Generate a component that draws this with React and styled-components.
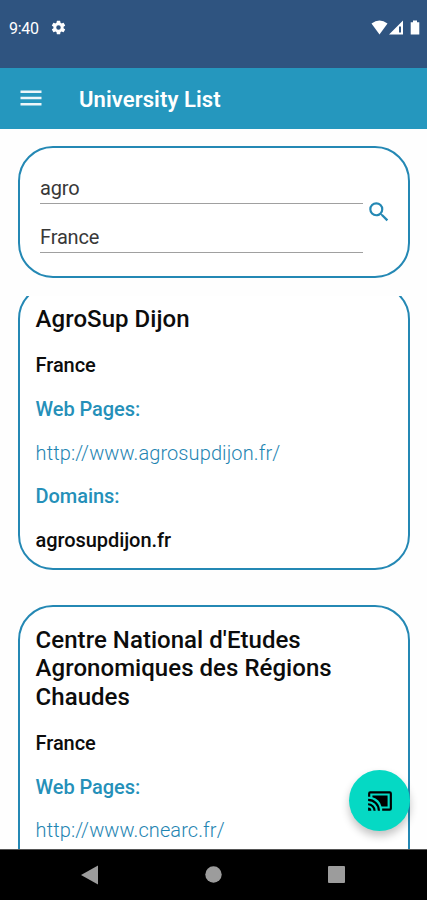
import React from "react";
import styled, { createGlobalStyle } from "styled-components";

const GlobalStyle = createGlobalStyle`
  * { box-sizing: border-box; }
  body { margin: 0; background: #fefefe; font-family: Roboto, "Noto Sans", sans-serif; color: #0c0c0c; }
`;

const Screen = styled.div`
  display: flex;
  flex-direction: column;
  width: 427px;
  height: 900px;
  overflow: hidden;
  position: relative;
`;

const StatusBar = styled.header`
  display: flex;
  align-items: flex-start;
  justify-content: space-between;
  flex: 0 0 68px;
  padding: 18px 6px 0 9px;
  background: #2f5480;
  color: #fff;
`;

const StatusGroup = styled.div`
  display: flex;
  align-items: center;
  height: 19px;
  gap: 11px;
`;

const Clock = styled.span`
  padding-top: 1px;
  font-size: 16px;
  line-height: 19px;
  letter-spacing: -0.3px;
`;

const AppBar = styled.div`
  display: flex;
  align-items: center;
  flex: 0 0 60.5px;
  padding: 2px 20px 0;
  gap: 37px;
  background: #2597be;
  color: #fff;
`;

const AppTitle = styled.h1`
  margin: 0;
  padding-top: 2px;
  font-size: 22px;
  line-height: 28px;
  font-weight: 600;
  letter-spacing: 0.1px;
`;

const Icon = styled.svg`
  display: block;
  flex: none;
  fill: currentColor;
`;

const MenuIcon = styled(Icon)`
  margin-top: -3px;
  opacity: 0.92;
`;

const SearchPanel = styled.form`
  display: flex;
  align-items: center;
  flex: 0 0 132px;
  margin: 17.5px 17px 0 18px;
  padding: 0 14px 0 20px;
  border: 2px solid #2488b4;
  border-radius: 35px;
  background: #fff;
`;

const Fields = styled.div`
  display: flex;
  flex-direction: column;
  flex: 0 0 323px;
  gap: 19px;
  padding-top: 3px;
`;

const Field = styled.input`
  display: block;
  width: 100%;
  height: 30px;
  padding: 0 0 1px;
  border: 0;
  border-bottom: 1px solid #a0a0a0;
  outline: 0;
  background: transparent;
  font: 400 20px/28px Roboto, sans-serif;
  letter-spacing: -0.15px;
  color: #383838;
`;

const SearchButton = styled.button`
  display: flex;
  padding: 0;
  margin-left: 3px;
  border: 0;
  background: none;
  color: #2488b4;
`;

const Results = styled.main`
  flex: 1;
  min-height: 0;
  margin-top: 18px;
  overflow: hidden;
`;

const ResultList = styled.div`
  display: flex;
  flex-direction: column;
  gap: 34.5px;
  margin: -12px 17px 0 18px;
`;

const Card = styled.article`
  min-height: 286px;
  padding: 19px 50px 3.5px 15.6px;
  border: 2px solid #2488b4;
  border-radius: 35px;
  background: #fff;
`;

const CardTitle = styled.h2`
  margin: 0 0 10.5px;
  font-size: 24px;
  line-height: 28.6px;
  font-weight: 500;
  letter-spacing: 0.04px;
`;

const Line = styled.div`
  font-size: 20px;
  line-height: 43.8px;
  font-weight: 500;
  letter-spacing: -0.08px;
`;

const Label = styled(Line)`
  color: #2590b9;
`;

const Link = styled.a`
  display: block;
  font-size: 20px;
  line-height: 43.8px;
  font-weight: 300;
  letter-spacing: 0.1px;
  color: #1f85b2;
  text-decoration: none;
`;

const CastButton = styled.button`
  position: absolute;
  left: 349px;
  top: 770px;
  display: flex;
  align-items: center;
  justify-content: center;
  width: 61px;
  height: 61px;
  padding: 0;
  border: 0;
  border-radius: 50%;
  background: #05d9c4;
  color: #000;
  box-shadow: 0 5px 9px rgba(0, 0, 0, 0.24);
`;

const NavBar = styled.nav`
  display: flex;
  align-items: center;
  justify-content: space-between;
  flex: 0 0 51.5px;
  padding: 0 82px 0 81px;
  border-top: 1px solid #555;
  background: #000;
  color: #9c9c9c;
`;

const universities = [
  {
    name: "AgroSup Dijon",
    country: "France",
    page: "http://www.agrosupdijon.fr/",
    domain: "agrosupdijon.fr",
  },
  {
    name: "Centre National d'Etudes Agronomiques des Régions Chaudes",
    country: "France",
    page: "http://www.cnearc.fr/",
  },
];

function University({ name, country, page, domain }) {
  return (
    <Card>
      <CardTitle>{name}</CardTitle>
      <Line>{country}</Line>
      <Label>Web Pages:</Label>
      <Link>{page}</Link>
      {domain && (
        <>
          <Label>Domains:</Label>
          <Line>{domain}</Line>
        </>
      )}
    </Card>
  );
}

export default function App() {
  return (
    <>
      <GlobalStyle />
      <Screen>
        <StatusBar>
          <StatusGroup>
            <Clock>9:40</Clock>
            <Icon width="17" height="17" viewBox="0 0 24 24">
              <path d="M19.14 12.94c.04-.3.06-.61.06-.94s-.02-.64-.07-.94l2.03-1.58a.49.49 0 0 0 .12-.61l-1.92-3.32a.49.49 0 0 0-.59-.22l-2.39.96a7 7 0 0 0-1.62-.94l-.36-2.54A.48.48 0 0 0 13.92 2.4h-3.84a.48.48 0 0 0-.47.41l-.36 2.54a7 7 0 0 0-1.62.94l-2.39-.96a.48.48 0 0 0-.59.22L2.74 8.87a.48.48 0 0 0 .12.61l2.03 1.58a7 7 0 0 0 0 1.88l-2.03 1.58a.49.49 0 0 0-.12.61l1.92 3.32c.12.22.37.29.59.22l2.39-.96c.5.38 1.03.7 1.62.94l.36 2.54c.05.24.24.41.47.41h3.84c.24 0 .44-.17.47-.41l.36-2.54a7 7 0 0 0 1.62-.94l2.39.96c.22.08.47 0 .59-.22l1.92-3.32a.48.48 0 0 0-.12-.61zM12 15.2a3.2 3.2 0 1 1 0-6.4 3.2 3.2 0 0 1 0 6.4z" />
            </Icon>
          </StatusGroup>
          <StatusGroup>
            <Icon width="50" height="17" viewBox="0 0 50 17">
              <path d="M.5 4.5Q8.500-1.500 16.500 4.500L8.500 15.500z" />
              <path fillRule="evenodd" d="M18 15.500 32 1.500v14zM28 7.500v6h2v-6z" />
              <path d="M42 1.500h4v1.800h2.300v12.200h-8.600V3.300H42z" />
            </Icon>
          </StatusGroup>
        </StatusBar>
        <AppBar>
          <MenuIcon width="22" height="16" viewBox="0 0 22 16">
            <path d="M.5.500h21V3H.5zM.5 6.700h21v2.500H.5zM.5 13h21v2.500H.5z" />
          </MenuIcon>
          <AppTitle>University List</AppTitle>
        </AppBar>
        <SearchPanel>
          <Fields>
            <Field defaultValue="agro" aria-label="Name" />
            <Field defaultValue="France" aria-label="Country" />
          </Fields>
          <SearchButton type="button" aria-label="Search">
            <Icon width="26" height="26" viewBox="0 0 24 24">
              <path d="M15.500 14h-.79l-.28-.27A6.470 6.470 0 0 0 16 9.500 6.500 6.500 0 1 0 9.500 16c1.610 0 3.090-.59 4.230-1.570l.27.28v.79l5 4.990L20.490 19zm-6 0a4.500 4.500 0 1 1 0-9 4.500 4.500 0 0 1 0 9z" />
            </Icon>
          </SearchButton>
        </SearchPanel>
        <Results>
          <ResultList>
            {universities.map((u) => (
              <University key={u.name} {...u} />
            ))}
          </ResultList>
        </Results>
        <NavBar>
          <Icon width="17" height="20" viewBox="0 0 17 20">
            <path d="M17 .5v19L0 10z" />
          </Icon>
          <Icon width="17" height="17" viewBox="0 0 17 17">
            <circle cx="8.500" cy="8.500" r="8.200" />
          </Icon>
          <Icon width="17" height="17" viewBox="0 0 17 17">
            <rect width="17" height="17" rx="1" />
          </Icon>
        </NavBar>
        <CastButton aria-label="Cast">
          <Icon width="26" height="26" viewBox="0 0 24 24">
            <path d="M1 18v3h3a3 3 0 0 0-3-3zm0-4v2a5 5 0 0 1 5 5h2a7 7 0 0 0-7-7zm18-7H5v1.630A12.010 12.010 0 0 1 13.370 17H19zM1 10v2a9 9 0 0 1 9 9h2A11 11 0 0 0 1 10zm20-7H3a2 2 0 0 0-2 2v3h2V5h18v14h-7v2h7a2 2 0 0 0 2-2V5a2 2 0 0 0-2-2z" />
          </Icon>
        </CastButton>
      </Screen>
    </>
  );
}
